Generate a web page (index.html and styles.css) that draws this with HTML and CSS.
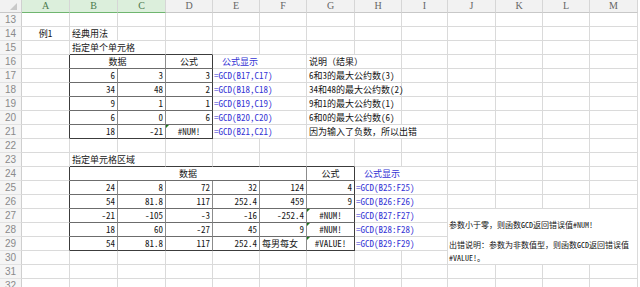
FILE: index.html
```html
<!DOCTYPE html>
<html lang="zh-CN">
<head>
<meta charset="utf-8">
<title>GCD</title>
<link rel="stylesheet" href="styles.css">
</head>
<body>
<div class="sheet">
  <div class="corner"><svg width="22" height="13" viewBox="0 0 22 13"><polygon points="17,3 17,10 10,10" fill="#c9c9c9"/></svg></div>
  <div class="h hs">A</div><div class="h hs">B</div><div class="h hs">C</div><div class="h">D</div><div class="h">E</div><div class="h">F</div><div class="h">G</div><div class="h">H</div><div class="h">I</div><div class="h">J</div><div class="h">K</div><div class="h">L</div><div class="h">M</div>

  <div class="rn">13</div><div class="c"></div><div class="c"></div><div class="c"></div><div class="c"></div><div class="c"></div><div class="c"></div><div class="c"></div><div class="c"></div><div class="c"></div><div class="c"></div><div class="c"></div><div class="c"></div><div class="c"></div>

  <div class="rn">14</div><div class="c ctr">例1</div><div class="c">经典用法</div><div class="c"></div><div class="c"></div><div class="c"></div><div class="c"></div><div class="c"></div><div class="c"></div><div class="c"></div><div class="c"></div><div class="c"></div><div class="c"></div><div class="c"></div>

  <div class="rn">15</div><div class="c"></div><div class="c s2 bb">指定单个单元格</div><div class="c bb"></div><div class="c"></div><div class="c"></div><div class="c"></div><div class="c"></div><div class="c"></div><div class="c"></div><div class="c"></div><div class="c"></div><div class="c"></div>

  <div class="rn">16</div><div class="c br"></div><div class="c s2 ctr ib ir">数据</div><div class="c ctr ib br">公式</div><div class="c s2 blue pl">公式显示</div><div class="c s2">说明（结果）</div><div class="c"></div><div class="c"></div><div class="c"></div><div class="c"></div><div class="c"></div>

  <div class="rn">17</div><div class="c br"></div><div class="c num ib ir">6</div><div class="c num ib ir">3</div><div class="c num ib br">3</div><div class="c s2 blue">=GCD(B17,C17)</div><div class="c s2">6和3的最大公约数(3)</div><div class="c"></div><div class="c"></div><div class="c"></div><div class="c"></div><div class="c"></div>

  <div class="rn">18</div><div class="c br"></div><div class="c num ib ir">34</div><div class="c num ib ir">48</div><div class="c num ib br">2</div><div class="c s2 blue">=GCD(B18,C18)</div><div class="c s2">34和48的最大公约数(2)</div><div class="c"></div><div class="c"></div><div class="c"></div><div class="c"></div><div class="c"></div>

  <div class="rn">19</div><div class="c br"></div><div class="c num ib ir">9</div><div class="c num ib ir">1</div><div class="c num ib br">1</div><div class="c s2 blue">=GCD(B19,C19)</div><div class="c s2">9和1的最大公约数(1)</div><div class="c"></div><div class="c"></div><div class="c"></div><div class="c"></div><div class="c"></div>

  <div class="rn">20</div><div class="c br"></div><div class="c num ib ir">6</div><div class="c num ib ir">0</div><div class="c num ib br">6</div><div class="c s2 blue">=GCD(B20,C20)</div><div class="c s2">6和0的最大公约数(6)</div><div class="c"></div><div class="c"></div><div class="c"></div><div class="c"></div><div class="c"></div>

  <div class="rn">21</div><div class="c br"></div><div class="c num bb ir">18</div><div class="c num bb ir">-21</div><div class="c ctr bb br err">#NUM!</div><div class="c s2 blue">=GCD(B21,C21)</div><div class="c s3">因为输入了负数，所以出错</div><div class="c"></div><div class="c"></div><div class="c"></div><div class="c"></div>

  <div class="rn">22</div><div class="c"></div><div class="c"></div><div class="c"></div><div class="c"></div><div class="c"></div><div class="c"></div><div class="c"></div><div class="c"></div><div class="c"></div><div class="c"></div><div class="c"></div><div class="c"></div><div class="c"></div>

  <div class="rn">23</div><div class="c"></div><div class="c s2 bb">指定单元格区域</div><div class="c bb"></div><div class="c bb"></div><div class="c bb"></div><div class="c bb"></div><div class="c"></div><div class="c"></div><div class="c"></div><div class="c"></div><div class="c"></div><div class="c"></div>

  <div class="rn">24</div><div class="c br"></div><div class="c s5 ctr ib ir">数据</div><div class="c ctr ib br">公式</div><div class="c s2 blue pl">公式显示</div><div class="c"></div><div class="c"></div><div class="c"></div><div class="c"></div>

  <div class="rn">25</div><div class="c br"></div><div class="c num ib ir">24</div><div class="c num ib ir">8</div><div class="c num ib ir">72</div><div class="c num ib ir">32</div><div class="c num ib ir">124</div><div class="c num ib br">4</div><div class="c s2 blue">=GCD(B25:F25)</div><div class="c"></div><div class="c"></div><div class="c"></div><div class="c"></div>

  <div class="rn">26</div><div class="c br"></div><div class="c num ib ir">54</div><div class="c num ib ir">81.8</div><div class="c num ib ir">117</div><div class="c num ib ir">252.4</div><div class="c num ib ir">459</div><div class="c num ib br">9</div><div class="c s2 blue">=GCD(B26:F26)</div><div class="c"></div><div class="c"></div><div class="c"></div><div class="c"></div>

  <div class="rn">27</div><div class="c br"></div><div class="c num ib ir">-21</div><div class="c num ib ir">-105</div><div class="c num ib ir">-3</div><div class="c num ib ir">-16</div><div class="c num ib ir">-252.4</div><div class="c ctr ib br err">#NUM!</div><div class="c s2 blue">=GCD(B27:F27)</div>
  <div class="note">
    <p>参数小于零，则函数GCD返回错误值#NUM!</p>
    <p>出错说明：参数为非数值型，则函数GCD返回错误值#VALUE!。</p>
  </div>

  <div class="rn">28</div><div class="c br"></div><div class="c num ib ir">18</div><div class="c num ib ir">60</div><div class="c num ib ir">-27</div><div class="c num ib ir">45</div><div class="c num ib ir">9</div><div class="c ctr ib br err">#NUM!</div><div class="c s2 blue">=GCD(B28:F28)</div>

  <div class="rn">29</div><div class="c br"></div><div class="c num bb ir">54</div><div class="c num bb ir">81.8</div><div class="c num bb ir">117</div><div class="c num bb ir">252.4</div><div class="c bb ir">每男每女</div><div class="c ctr bb br err">#VALUE!</div><div class="c s2 blue">=GCD(B29:F29)</div>

  <div class="rn">30</div><div class="c"></div><div class="c"></div><div class="c"></div><div class="c"></div><div class="c"></div><div class="c"></div><div class="c"></div><div class="c"></div><div class="c"></div>

  <div class="rn">31</div><div class="c"></div><div class="c"></div><div class="c"></div><div class="c"></div><div class="c"></div><div class="c"></div><div class="c"></div><div class="c"></div><div class="c"></div><div class="c"></div><div class="c"></div><div class="c"></div><div class="c"></div>

  <div class="rn">32</div><div class="c"></div><div class="c"></div><div class="c"></div><div class="c"></div><div class="c"></div><div class="c"></div><div class="c"></div><div class="c"></div><div class="c"></div><div class="c"></div><div class="c"></div><div class="c"></div><div class="c"></div>
</div>
</body>
</html>
```

FILE: styles.css
```css
html, body {
  margin: 0;
  padding: 0;
  background: #ffffff;
  overflow: hidden;
}

.sheet {
  display: grid;
  grid-template-columns: 22px 48px 48px 48px 47px 47px 47px 48px 47px 46px 48px 47px 47px 48px;
  grid-template-rows: 13px;
  grid-auto-rows: 14px;
  width: 638px;
  font-family: "Noto Sans Mono CJK SC", "Liberation Mono", "Noto Sans CJK SC", monospace;
  font-size: 9px;
  color: #151515;
}

.corner {
  background: #f2f2f2;
  border-right: 1px solid #d0d0d0;
  border-bottom: 1px solid #c8c8c8;
  box-sizing: border-box;
}

.corner svg {
  display: block;
}

.h {
  background: #f2f2f2;
  border-right: 1px solid #d6d6d6;
  border-bottom: 1px solid #c8c8c8;
  box-sizing: border-box;
  text-align: center;
  font-family: "Liberation Serif", serif;
  font-size: 10px;
  line-height: 12px;
  color: #666666;
}

.hs {
  background: #dcefdc;
  border-bottom-color: #6fb56f;
  color: #4d7a4d;
}

.rn {
  background: #f5f5f5;
  border-right: 1px solid #cfcfcf;
  border-bottom: 1px solid #e2e2e2;
  box-sizing: border-box;
  text-align: center;
  font-family: "Liberation Sans", sans-serif;
  font-size: 10px;
  line-height: 13px;
  color: #8a8a8a;
}

.c {
  border-right: 1px solid #dadada;
  border-bottom: 1px solid #dadada;
  box-sizing: border-box;
  padding: 0 2px;
  line-height: 13px;
  white-space: nowrap;
  overflow: visible;
  position: relative;
  min-width: 0;
}

.num { text-align: right; }
.ctr { text-align: center; }

.s2 { grid-column: span 2; }
.s3 { grid-column: span 3; }
.s5 { grid-column: span 5; }

.blue {
  color: #3434d4;
  padding-left: 1px;
}

.pl { padding-left: 9px; }

.ir { border-right-color: #8c8c8c; }
.ib { border-bottom-color: #6c6c6c; }
.br { border-right-color: #3c3c3c; }
.bb { border-bottom-color: #3c3c3c; }

.err::before {
  content: "";
  position: absolute;
  left: 0;
  top: 0;
  border-top: 3px solid #1f7a1f;
  border-right: 3px solid transparent;
}

.note {
  grid-column: span 4;
  grid-row: span 4;
  border-right: 1px solid #dadada;
  border-bottom: 1px solid #dadada;
  box-sizing: border-box;
  padding: 9px 2px 0 1px;
  font-size: 8px;
  line-height: 13px;
}

.note p {
  margin: 0;
}

.note p + p {
  margin-top: 7px;
}
```
